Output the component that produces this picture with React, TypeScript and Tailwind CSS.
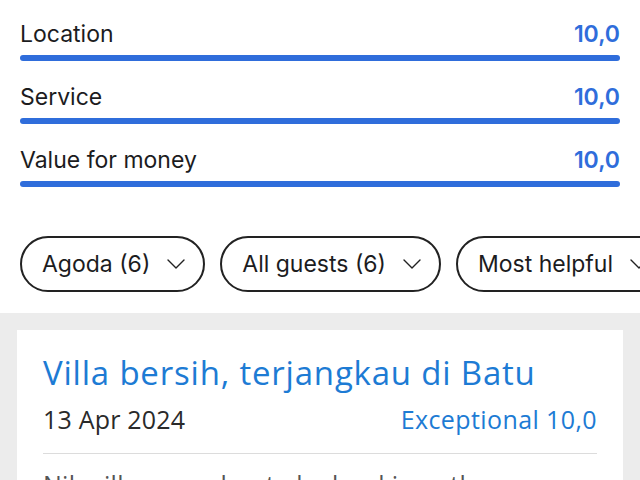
const scores = [
  { label: "Location", value: "10,0" },
  { label: "Service", value: "10,0" },
  { label: "Value for money", value: "10,0" },
];

const filters = ["Agoda (6)", "All guests (6)", "Most helpful"];

function Chevron() {
  return (
    <svg width="18" height="10" viewBox="0 0 18 10" fill="none" className="shrink-0">
      <polyline points="1,1 9,9 17,1" stroke="#222" strokeWidth="1.4" strokeLinecap="round" strokeLinejoin="round" />
    </svg>
  );
}

export default function App() {
  return (
    <div className="w-[640px] h-[480px] overflow-hidden bg-white font-['Inter',sans-serif]">
      {/* Score bars */}
      <div className="px-5 pt-[21px]">
        {scores.map((s) => (
          <div key={s.label} className="pb-[23px]">
            <div className="flex justify-between items-end h-[26px] text-[23px] leading-[26px]">
              <span className="text-[#1c1c1e]">{s.label}</span>
              <span className="text-[#2f6ddb] font-semibold">{s.value}</span>
            </div>
            <div className="mt-2 h-[6px] rounded-full bg-[#2f6ddb]" />
          </div>
        ))}
      </div>

      {/* Filter chips */}
      <div className="flex gap-[15px] pl-5 pt-[26px] whitespace-nowrap">
        {filters.map((f) => (
          <div
            key={f}
            className="shrink-0 flex items-center gap-[17px] h-[56px] pl-5 pr-[18px] rounded-full border-2 border-[#222] text-[23px] text-[#1c1c1e]"
          >
            <span>{f}</span>
            <Chevron />
          </div>
        ))}
      </div>

      {/* Reviews */}
      <div className="mt-[21px] bg-[#ececec] pt-[17px] px-[17px] h-[200px]">
        <div className="bg-white px-[26px] pt-[22px] font-['Open_Sans',sans-serif]">
          <h3 className="text-[33px] leading-[42px] tracking-[0.8px] text-[#1d7bd4]">
            Villa bersih, terjangkau di Batu
          </h3>
          <div className="flex justify-between items-center mt-[9px] text-[25px] leading-[32px]">
            <span className="text-[#2a2a2a] tracking-[0.2px]">13 Apr 2024</span>
            <span className="text-[#1d7bd4] tracking-[0.4px]">Exceptional 10,0</span>
          </div>
          <div className="mt-[18px] border-t border-[#dcdcdc]" />
          <p className="mt-[14px] text-[25px] leading-[32px] tracking-[0.3px] text-[#555]">
            Nih villa nemu buat aku booking utk
          </p>
        </div>
      </div>
    </div>
  );
}
